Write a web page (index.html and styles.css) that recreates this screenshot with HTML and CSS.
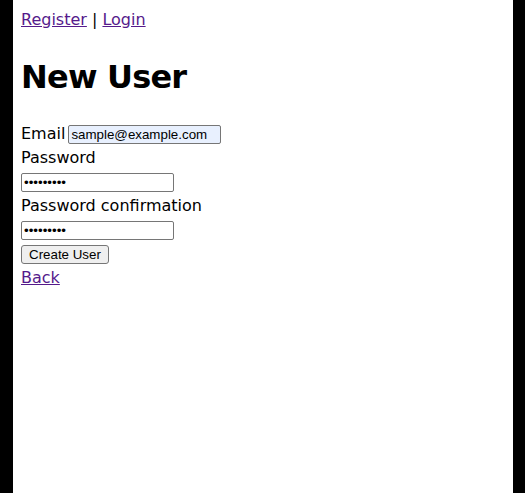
FILE: index.html
```html
<!DOCTYPE html>
<html lang="ja">
<head>
<meta charset="utf-8">
<title>New User</title>
<link rel="stylesheet" href="styles.css">
</head>
<body>
<div class="page">
  <nav class="nav"><a href="#">Register</a> | <a href="#">Login</a></nav>
  <h1 class="title">New User</h1>
  <form class="form">
    <div class="field"><label class="inline-label">Email</label><input class="input autofill" type="email" value="sample@example.com"></div>
    <div class="field"><label>Password</label><br><input class="input" type="password" value="password1"></div>
    <div class="field"><label>Password confirmation</label><br><input class="input" type="password" value="password1"></div>
    <div class="actions"><button class="btn" type="button">Create User</button></div>
  </form>
  <a href="#">Back</a>
</div>
</body>
</html>
```
FILE: styles.css
```css
html, body {
  margin: 0;
  background: #000;
  height: 100%;
}
.page {
  box-sizing: border-box;
  width: 500px;
  min-height: 100%;
  margin-left: 13px;
  padding: 7.5px 8px 8px;
  background: #fff;
  font-family: "DejaVu Sans", "Noto Sans CJK JP", sans-serif;
  font-size: 16px;
  line-height: 24px;
  color: #000;
}
a { color: #551a8b; }
.nav { margin: 0; }
.title {
  font-size: 32px;
  line-height: 48px;
  font-weight: bold;
  letter-spacing: -0.8px;
  margin: 21.44px 0;
}
.form { margin: 0; }
.inline-label { margin-right: 3px; }
.input {
  font-family: "Liberation Sans", Arial, sans-serif;
  font-size: 13.33px;
  line-height: normal;
  width: 153px;
  box-sizing: border-box;
  border: 1px solid #767676;
  border-radius: 2px;
  padding: 1px 2px;
  background: #fff;
}
.autofill { background: #e8f0fe; }
.btn {
  font-family: "Liberation Sans", Arial, sans-serif;
  font-size: 13.33px;
  line-height: normal;
  padding: 1px 7px;
  border: 1px solid #767676;
  border-radius: 3px;
  background: #efefef;
  color: #000;
}
```
